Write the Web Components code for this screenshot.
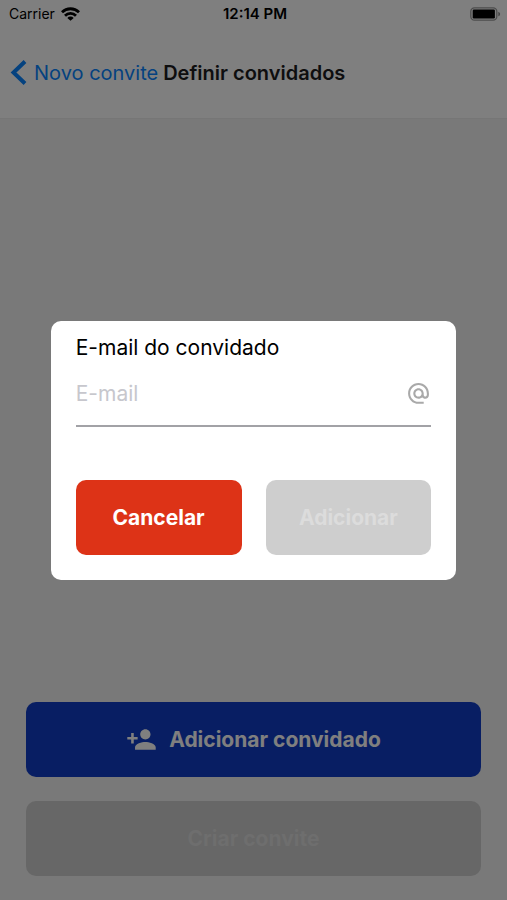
<!DOCTYPE html>
<html lang="pt-BR">
<head>
<meta charset="utf-8">
<meta name="viewport" content="width=device-width, initial-scale=1">
<title>Definir convidados</title>
<style>
  body {
    margin: 0;
    background: #f2f2f2;
    font-family: Inter, "Liberation Sans", sans-serif;
    color: #000;
  }
</style>
</head>
<body>
<invite-screen>
  <status-bar slot="header" carrier="Carrier" time="12:14 PM"></status-bar>
  <nav-header slot="header" back="Novo convite">Definir convidados</nav-header>
  <app-button slot="actions" variant="primary">
    <app-icon slot="icon" name="person-add"></app-icon>Adicionar convidado
  </app-button>
  <app-button slot="actions" disabled>Criar convite</app-button>
</invite-screen>
<modal-dialog label="Adicionar convidado">
  <text-field label="E-mail do convidado" placeholder="E-mail">
    <app-icon name="at"></app-icon>
  </text-field>
  <app-button slot="actions" variant="danger">Cancelar</app-button>
  <app-button slot="actions" disabled>Adicionar</app-button>
</modal-dialog>

<script>
const ICONS = {
  'person-add': 'M15 12c2.21 0 4-1.79 4-4s-1.79-4-4-4-4 1.79-4 4 1.79 4 4 4zm-9-2V7H4v3H1v2h3v3h2v-3h3v-2H6zm9 4c-2.67 0-8 1.34-8 4v2h16v-2c0-2.66-5.33-4-8-4z',
  'at': 'M12 1.95c-5.52 0-10 4.48-10 10s4.48 10 10 10h5v-2h-5c-4.34 0-8-3.66-8-8s3.66-8 8-8 8 3.66 8 8v1.43c0 .79-.71 1.57-1.5 1.57s-1.5-.78-1.5-1.57v-1.43c0-2.76-2.24-5-5-5s-5 2.24-5 5 2.24 5 5 5c1.38 0 2.64-.56 3.54-1.47.65.89 1.77 1.47 2.96 1.47 1.97 0 3.5-1.6 3.5-3.57v-1.43c0-5.52-4.48-10-10-10zm0 13c-1.66 0-3-1.34-3-3s1.34-3 3-3 3 1.34 3 3-1.34 3-3 3z',
};

class AppIcon extends HTMLElement {
  constructor() {
    super();
    this.attachShadow({ mode: 'open' });
  }
  connectedCallback() {
    this.shadowRoot.innerHTML = `
      <style>
        :host { display: block; width: var(--icon-size, 25px); height: var(--icon-size, 25px); }
        svg { display: block; width: 100%; height: 100%; fill: currentColor; }
      </style>
      <svg viewBox="0 0 24 24" aria-hidden="true"><path d="${ICONS[this.getAttribute('name')]}"/></svg>
    `;
  }
}

class StatusBar extends HTMLElement {
  constructor() {
    super();
    this.attachShadow({ mode: 'open' });
  }
  connectedCallback() {
    this.shadowRoot.innerHTML = `
      <style>
        :host {
          display: grid;
          grid-template-columns: 1fr auto 1fr;
          align-items: center;
          height: 27px;
          padding: 0 6px 0 9px;
          font-size: 14px;
        }
        .carrier { display: flex; align-items: center; gap: 6px; }
        .time { font-size: 15px; font-weight: 600; }
        .battery { justify-self: end; }
        svg { display: block; }
      </style>
      <span class="carrier">${this.getAttribute('carrier')}
        <svg width="19" height="14" viewBox="0 0 19 14" aria-label="Wi-Fi">
          <g fill="none" stroke="#000" stroke-width="2.8">
            <path d="M1 5.200a12.200 12.200 0 0 1 17 0"/>
            <path d="M4 8.700a7.800 7.800 0 0 1 11 0"/>
          </g>
          <path d="M9.500 13.800L6.300 10.900a4.500 4.500 0 0 1 6.400 0z"/>
        </svg>
      </span>
      <span class="time">${this.getAttribute('time')}</span>
      <svg class="battery" width="31" height="14" viewBox="0 0 31 14" aria-label="Bateria">
        <rect x=".8" y=".8" width="26" height="12.400" rx="3.600" fill="none" stroke="#000" stroke-opacity=".4" stroke-width="1.300"/>
        <rect x="2.700" y="2.600" width="22.200" height="8.800" rx="1.200"/>
        <path d="M28.300 4.700c2.400.8 2.400 3.800 0 4.600z" fill-opacity=".45"/>
      </svg>
    `;
  }
}

class NavHeader extends HTMLElement {
  constructor() {
    super();
    this.attachShadow({ mode: 'open' });
  }
  connectedCallback() {
    this.shadowRoot.innerHTML = `
      <style>
        :host {
          display: flex;
          align-items: center;
          gap: 5px;
          height: 91px;
          padding-left: 10px;
          font-size: 20px;
          line-height: 26px;
        }
        a { display: flex; align-items: center; gap: 7px; color: #0a84ff; text-decoration: none; }
        svg { display: block; }
        h1 { margin: 0; font: inherit; font-weight: 600; color: #1c1c1e; }
        a, h1 { white-space: nowrap; }
      </style>
      <a href="#"><svg width="17" height="26" viewBox="0 0 17 26" aria-hidden="true">
        <path d="M15 1.500L3.500 12.500l11.500 11" fill="none" stroke="currentColor" stroke-width="4"/>
      </svg>${this.getAttribute('back')}</a>
      <h1><slot></slot></h1>
    `;
  }
}

class AppButton extends HTMLElement {
  constructor() {
    super();
    this.attachShadow({ mode: 'open' });
  }
  connectedCallback() {
    this.shadowRoot.innerHTML = `
      <style>
        :host { display: block; --icon-size: 31px; }
        button {
          display: flex;
          align-items: center;
          justify-content: center;
          gap: 12px;
          width: 100%;
          height: 75px;
          padding: 0;
          border: 0;
          border-radius: 10px;
          background: #cecece;
          color: #dcdcdc;
          font: inherit;
          font-size: 21px;
          font-weight: 700;
        }
        :host([variant="primary"]) button { background: #103dc6; color: #fff; }
        :host([variant="danger"]) button { background: #dd3317; color: #fff; }
      </style>
      <button type="button" ${this.hasAttribute('disabled') ? 'disabled' : ''}>
        <slot name="icon"></slot><span><slot></slot></span>
      </button>
    `;
  }
}

class TextField extends HTMLElement {
  constructor() {
    super();
    this.attachShadow({ mode: 'open' });
  }
  connectedCallback() {
    this.shadowRoot.innerHTML = `
      <style>
        :host { display: block; font-size: 21px; }
        label { display: block; line-height: 24px; }
        .row {
          box-sizing: border-box;
          display: flex;
          align-items: center;
          height: 67px;
          padding-top: 3px;
          border-bottom: 2px solid #a2a2a6;
          color: #a9a9a9;
        }
        input {
          flex: 1;
          min-width: 0;
          padding: 0;
          border: 0;
          outline: 0;
          background: none;
          font: inherit;
          color: #000;
        }
        input::placeholder { color: #c7c7cd; opacity: 1; }
      </style>
      <label for="field">${this.getAttribute('label')}</label>
      <div class="row">
        <input id="field" type="email" placeholder="${this.getAttribute('placeholder')}">
        <slot></slot>
      </div>
    `;
  }
}

class ModalDialog extends HTMLElement {
  constructor() {
    super();
    this.attachShadow({ mode: 'open' });
  }
  connectedCallback() {
    this.shadowRoot.innerHTML = `
      <style>
        :host {
          position: fixed;
          inset: 0;
          display: flex;
          align-items: center;
          justify-content: center;
          background: rgba(0, 0, 0, .5);
        }
        .card {
          box-sizing: border-box;
          width: 80%;
          padding: 15px 25px 25px;
          border-radius: 10px;
          background: #fff;
        }
        .actions {
          display: grid;
          grid-template-columns: 1fr 1fr;
          gap: 24px;
          margin-top: 53px;
        }
      </style>
      <div class="card" role="dialog" aria-modal="true" aria-label="${this.getAttribute('label')}">
        <slot></slot>
        <div class="actions"><slot name="actions"></slot></div>
      </div>
    `;
  }
}

class InviteScreen extends HTMLElement {
  constructor() {
    super();
    this.attachShadow({ mode: 'open' });
    this.shadowRoot.innerHTML = `
      <style>
        :host { display: flex; flex-direction: column; min-height: 100vh; }
        header { background: #fff; border-bottom: 1px solid #ececec; }
        main { flex: 1; }
        footer { display: grid; gap: 24px; padding: 24px 26px; }
      </style>
      <header><slot name="header"></slot></header>
      <main><slot></slot></main>
      <footer><slot name="actions"></slot></footer>
    `;
  }
}

customElements.define('app-icon', AppIcon);
customElements.define('status-bar', StatusBar);
customElements.define('nav-header', NavHeader);
customElements.define('app-button', AppButton);
customElements.define('text-field', TextField);
customElements.define('modal-dialog', ModalDialog);
customElements.define('invite-screen', InviteScreen);
</script>
</body>
</html>
